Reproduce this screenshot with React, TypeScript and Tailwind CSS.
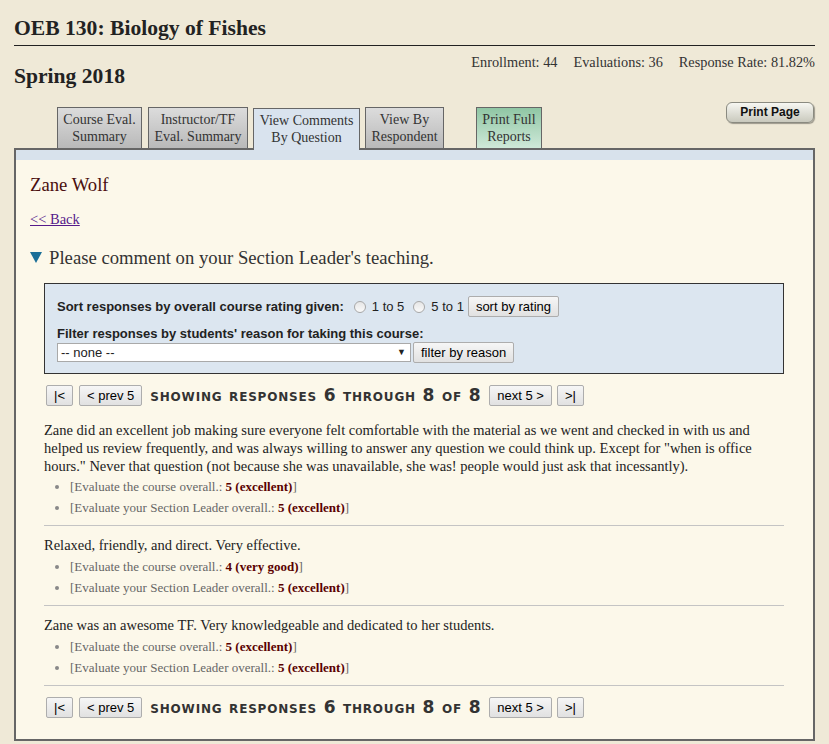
import type { ReactNode } from "react";

const serif = "font-['Liberation_Serif','Times_New_Roman',serif]";
const sans = "font-['Liberation_Sans',Arial,sans-serif]";

interface Rating {
  label: string;
  value: string;
}

interface Comment {
  text: string;
  ratings: Rating[];
}

const comments: Comment[] = [
  {
    text: 'Zane did an excellent job making sure everyone felt comfortable with the material as we went and checked in with us and helped us review frequently, and was always willing to answer any question we could think up. Except for "when is office hours." Never that question (not because she was unavailable, she was! people would just ask that incessantly).',
    ratings: [
      { label: "Evaluate the course overall.", value: "5 (excellent)" },
      { label: "Evaluate your Section Leader overall.", value: "5 (excellent)" },
    ],
  },
  {
    text: "Relaxed, friendly, and direct. Very effective.",
    ratings: [
      { label: "Evaluate the course overall.", value: "4 (very good)" },
      { label: "Evaluate your Section Leader overall.", value: "5 (excellent)" },
    ],
  },
  {
    text: "Zane was an awesome TF. Very knowledgeable and dedicated to her students.",
    ratings: [
      { label: "Evaluate the course overall.", value: "5 (excellent)" },
      { label: "Evaluate your Section Leader overall.", value: "5 (excellent)" },
    ],
  },
];

function FormButton({ children }: { children: ReactNode }) {
  return (
    <button
      className={`${sans} h-[21px] rounded-[2px] border border-[#adadad] bg-gradient-to-b from-[#f6f6f6] to-[#e1e1e1] px-[7px] text-[13px] leading-[19px] text-black`}
    >
      {children}
    </button>
  );
}

function Radio() {
  return (
    <span className="inline-block h-[12px] w-[12px] rounded-full border border-[#a8a8a8] bg-gradient-to-b from-[#e6e6e6] to-[#fafafa]" />
  );
}

function Pager() {
  return (
    <div className="flex items-center">
      <FormButton>|&lt;</FormButton>
      <span className="ml-[6px]">
        <FormButton>&lt; prev 5</FormButton>
      </span>
      <span className="mx-[8px] font-['DejaVu_Sans',Verdana,sans-serif] text-[17px] font-bold leading-[20px] tracking-[0.8px] text-[#333] [font-variant:small-caps]">
        showing responses 6 through 8 of 8
      </span>
      <FormButton>next 5 &gt;</FormButton>
      <span className="ml-[5px]">
        <FormButton>&gt;|</FormButton>
      </span>
    </div>
  );
}

function Tab({
  width,
  children,
  active,
  green,
}: {
  width: string;
  children: ReactNode;
  active?: boolean;
  green?: boolean;
}) {
  if (active) {
    return (
      <div
        className={`${width} relative z-10 -mb-[2px] flex h-[42px] flex-col items-center justify-center border border-b-0 border-[#666] bg-[#d9e3ee] pb-[2px] text-center leading-[17px]`}
      >
        {children}
      </div>
    );
  }
  const bg = green
    ? "bg-gradient-to-b from-[#8fc6a4] to-[#cfe9d9]"
    : "bg-gradient-to-b from-[#dcdcdc] to-[#b9b9b9]";
  return (
    <div
      className={`${width} ${bg} flex h-[41px] flex-col items-center justify-center border border-b-0 border-[#666] text-center leading-[17px]`}
    >
      {children}
    </div>
  );
}

export default function App() {
  return (
    <div className={`${serif} min-h-[744px] bg-[#efe9d7] px-[14px] pt-[15px] text-[#222]`}>
      <h1 className="h-[31px] border-b border-[#222] text-[21.6px] font-bold leading-[26px] text-[#222]">
        OEB 130: Biology of Fishes
      </h1>

      <div className="flex items-start justify-between">
        <h2 className="mt-[17px] text-[21.6px] font-bold leading-[26px]">Spring 2018</h2>
        <div className="mt-[8px] flex gap-[16px] text-[14.3px] leading-[17px] text-[#333]">
          <span>Enrollment: 44</span>
          <span>Evaluations: 36</span>
          <span>Response Rate: 81.82%</span>
        </div>
      </div>

      <div className="mt-[13px] flex items-end justify-between">
        <div className="flex items-end pl-[43px] text-[14px] text-[#333]">
          <Tab width="w-[85px]">
            <span>Course Eval.</span>
            <span>Summary</span>
          </Tab>
          <div className="ml-[6px]">
            <Tab width="w-[100px]">
              <span>Instructor/TF</span>
              <span>Eval. Summary</span>
            </Tab>
          </div>
          <div className="ml-[5px]">
            <Tab width="w-[107px]" active>
              <span>View Comments</span>
              <span>By Question</span>
            </Tab>
          </div>
          <div className="ml-[5px]">
            <Tab width="w-[79px]">
              <span>View By</span>
              <span>Respondent</span>
            </Tab>
          </div>
          <div className="ml-[32px]">
            <Tab width="w-[66px]" green>
              <span>Print Full</span>
              <span>Reports</span>
            </Tab>
          </div>
        </div>
        <button
          className={`${sans} mb-[25px] mr-[1px] h-[21px] w-[88px] rounded-[6px] border border-[#8a8a80] bg-gradient-to-b from-[#f7f7f2] to-[#c9c9bd] text-[12px] font-bold leading-[19px] text-[#111] shadow-[1px_1px_1px_rgba(0,0,0,0.35)]`}
        >
          Print Page
        </button>
      </div>

      <div className="border-2 border-[#666] bg-[#fcf8ea]">
        <div className="h-[10px] bg-[#d8e2ec]" />
        <div className="px-[14px] pb-[20px]">
          <div className="mt-[14px] text-[18.7px] leading-[21px] text-[#4a0f0f]">Zane Wolf</div>
          <a href="#" className="mt-[16px] block w-fit text-[14.5px] leading-[17px] text-[#551a8b] underline">
            &lt;&lt; Back
          </a>
          <div className="mt-[19px] flex items-center text-[18.7px] leading-[21px] text-[#333]">
            <span className="mr-[7px] inline-block h-0 w-0 border-x-[6px] border-t-[11px] border-x-transparent border-t-[#1b6f98]" />
            Please comment on your Section Leader's teaching.
          </div>

          <div className="ml-[14px] mr-[15px] mt-[15px]">
            <div className={`${sans} border border-[#333] bg-[#dce6f0] px-[12px] pb-[10px] pt-[12px] text-[13px] text-[#222]`}>
              <div className="flex items-center">
                <span className="font-bold">Sort responses by overall course rating given:</span>
                <span className="ml-[10px] flex items-center">
                  <Radio />
                </span>
                <span className="ml-[6px]">1 to 5</span>
                <span className="ml-[9px] flex items-center">
                  <Radio />
                </span>
                <span className="ml-[6px]">5 to 1</span>
                <span className="ml-[4px]">
                  <FormButton>sort by rating</FormButton>
                </span>
              </div>
              <div className="mt-[9px] font-bold leading-[16px]">
                Filter responses by students' reason for taking this course:
              </div>
              <div className="flex items-center">
                <div className="flex h-[19px] w-[354px] items-center justify-between border border-[#a9a9a9] bg-white pl-[3px] pr-[4px] leading-[17px]">
                  <span>-- none --</span>
                  <span className="text-[9px]">▼</span>
                </div>
                <span className="ml-[2px]">
                  <FormButton>filter by reason</FormButton>
                </span>
              </div>
            </div>

            <div className="mt-[9px] pl-[2px]">
              <Pager />
            </div>

            {comments.map((c, i) => (
              <div key={i}>
                <div className={`${i === 0 ? "mt-[14px]" : "mt-[10px]"}`}>
                  <p className="text-[14.5px] leading-[18px] text-[#222]">{c.text}</p>
                  <ul
                    className={`${i === 0 ? "mt-[1px]" : "mt-[2px]"} list-disc pl-[26px] text-[13px] leading-[21px] text-[#666] marker:text-[#888]`}
                  >
                    {c.ratings.map((r) => (
                      <li key={r.label}>
                        [{r.label}: <b className="text-[#5a0000]">{r.value}</b>]
                      </li>
                    ))}
                  </ul>
                </div>
                <div className="mt-[7px] border-t border-[#c4c4c4]" />
              </div>
            ))}

            <div className="mt-[9px] pl-[2px]">
              <Pager />
            </div>
          </div>
        </div>
      </div>
    </div>
  );
}
